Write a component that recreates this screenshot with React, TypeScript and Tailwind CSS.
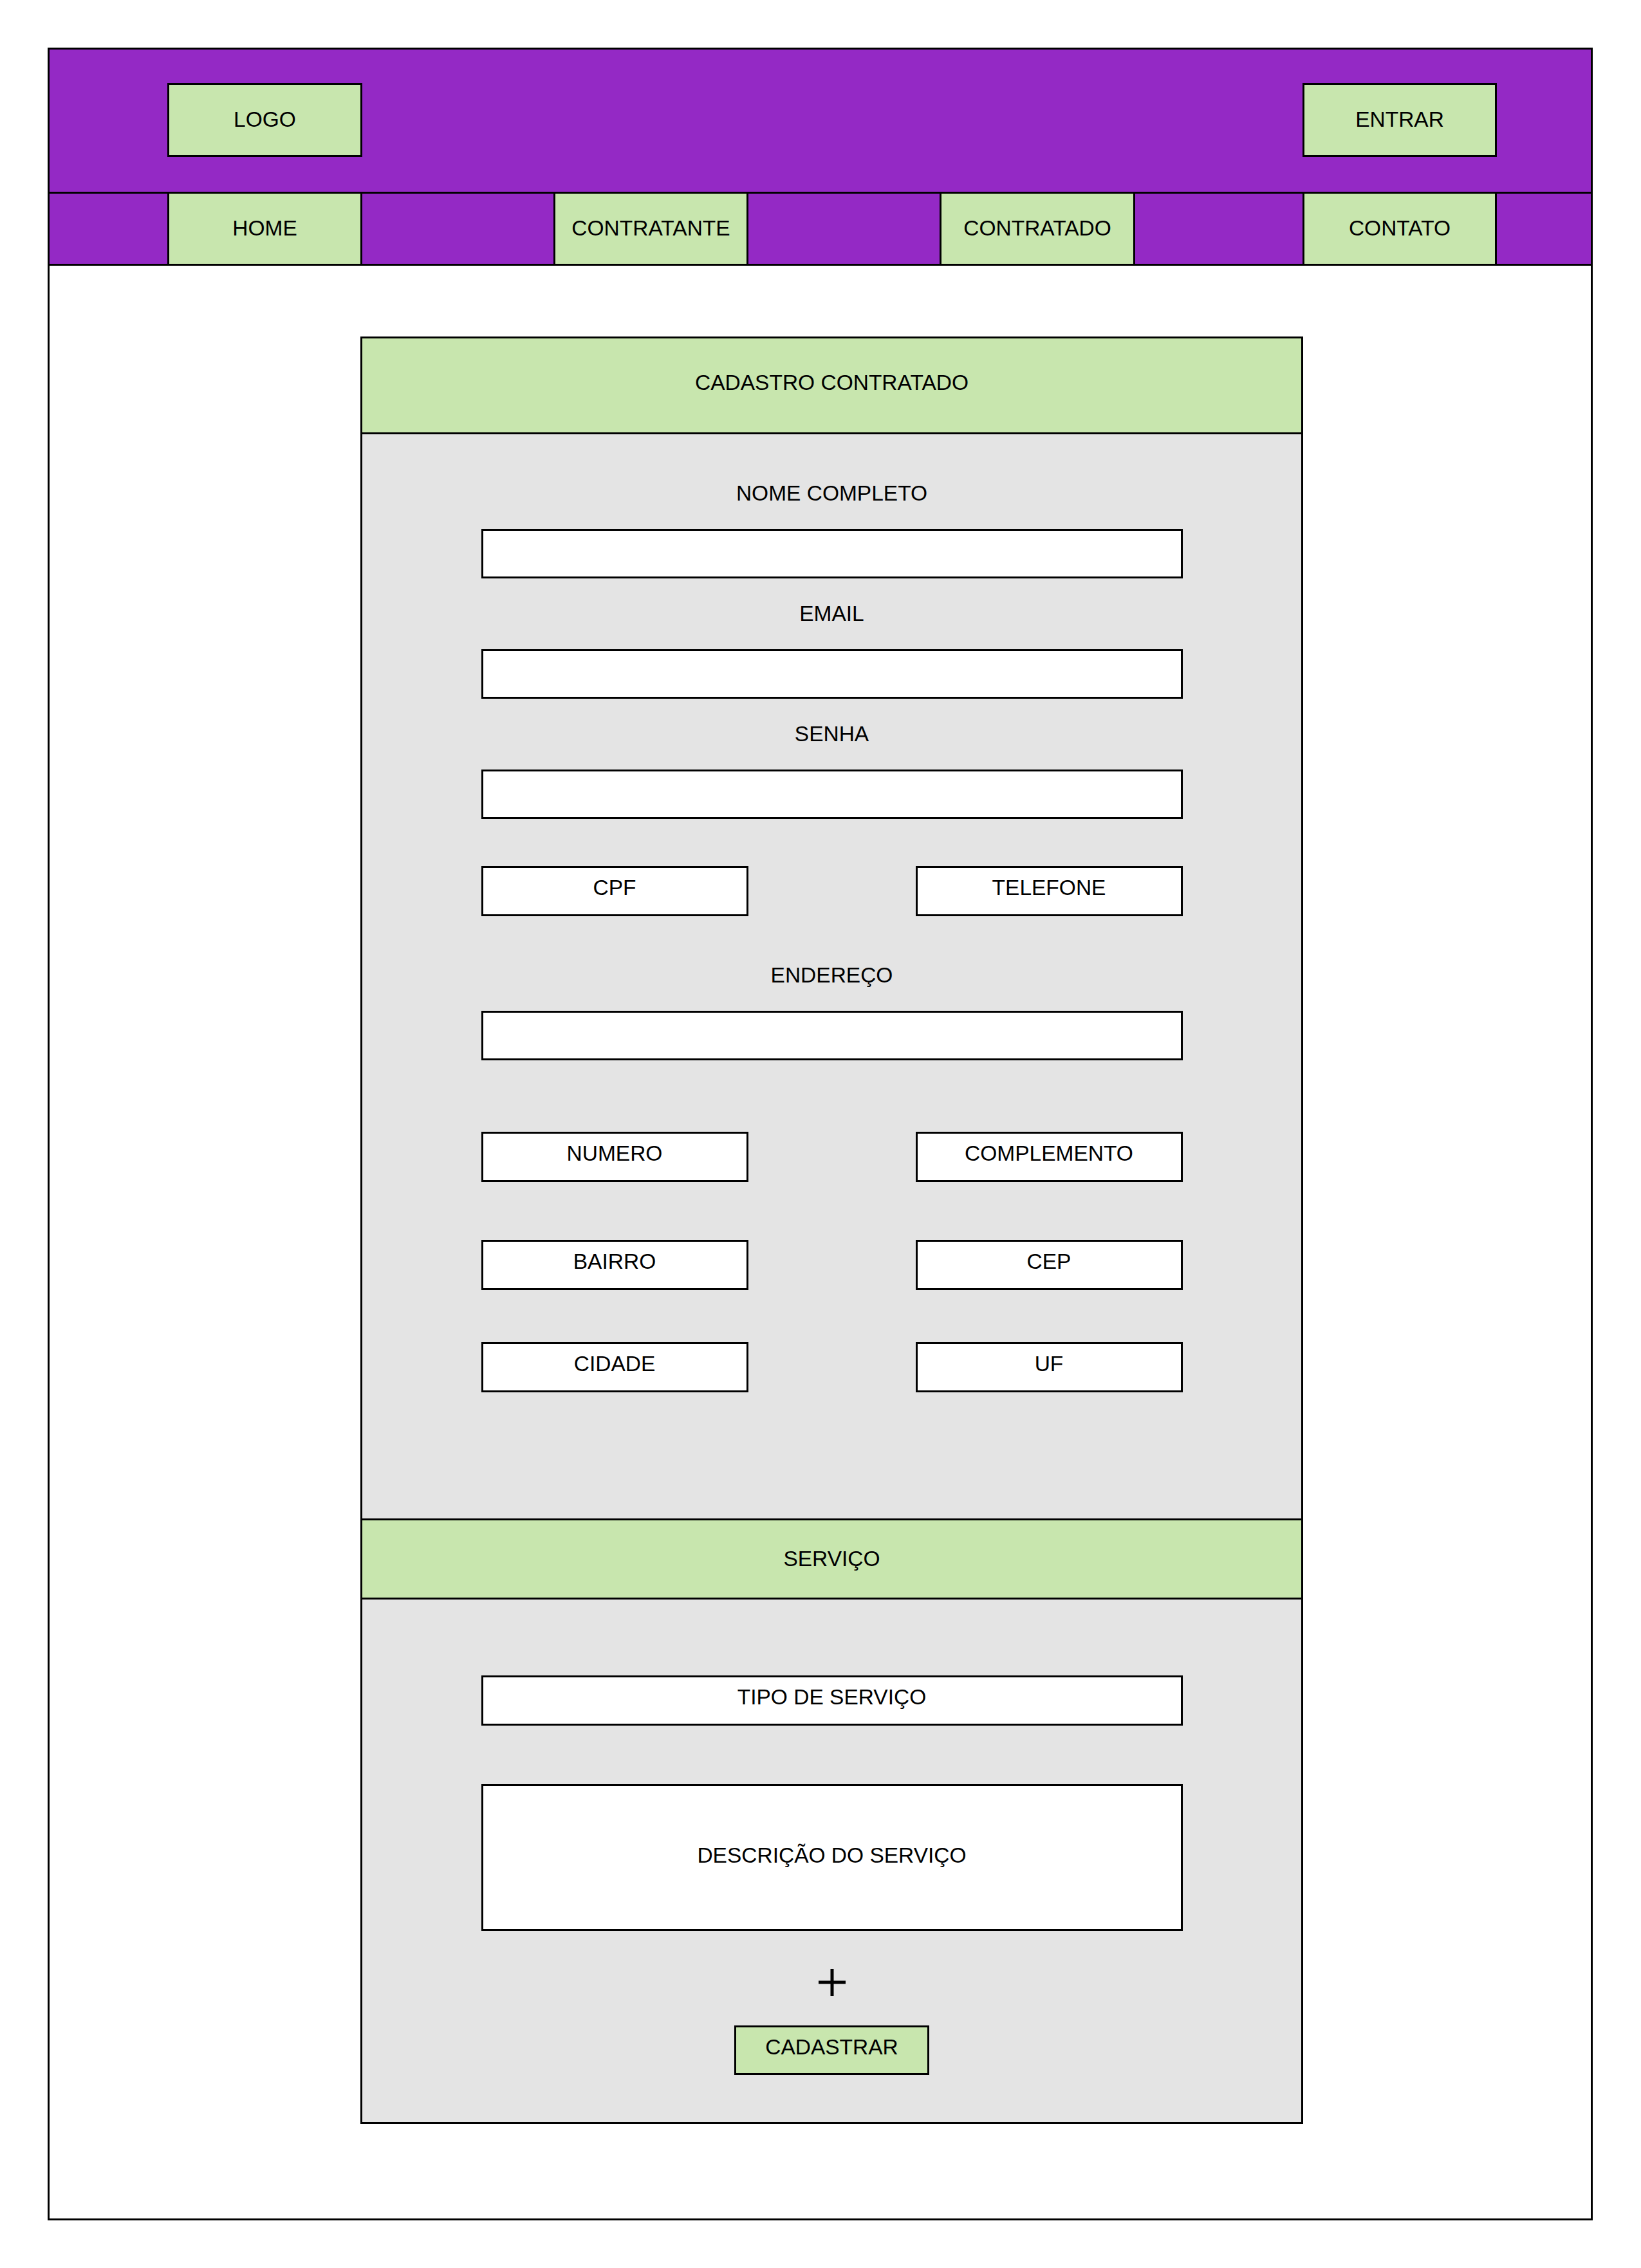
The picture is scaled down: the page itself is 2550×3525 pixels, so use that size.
import React from 'react';

const navItems = [
  { name: 'HOME', cls: 'ml-[183px] w-[303px]' },
  { name: 'CONTRATANTE', cls: 'ml-[297px] w-[303px]' },
  { name: 'CONTRATADO', cls: 'ml-[297px] w-[304px]' },
  { name: 'CONTATO', cls: 'ml-[260px] w-[302px]' },
];

function Label({ text, className }: { text: string; className: string }) {
  return <p className={`text-center text-[33.5px] leading-[34px] ${className}`}>{text}</p>;
}

function Field({ className }: { className: string }) {
  return <div className={`mx-auto h-[77px] w-[1090px] border-[3px] border-black bg-white ${className}`} />;
}

function SmallBox({ text }: { text: string }) {
  return (
    <div className="flex h-[78px] w-[415px] justify-center border-[3px] border-black bg-white pt-[14px]">
      <span className="text-[33.5px] leading-[34px]">{text}</span>
    </div>
  );
}

function PairRow({ left, right, className }: { left: string; right: string; className: string }) {
  return (
    <div className={`mx-auto flex w-[1090px] justify-between ${className}`}>
      <SmallBox text={left} />
      <SmallBox text={right} />
    </div>
  );
}

export default function App() {
  return (
    <div
      className="h-[3525px] w-[2550px] bg-white pl-[74px] pt-[74px] text-black"
      style={{ fontFamily: '"Liberation Sans", Arial, sans-serif' }}
    >
      <div className="flex h-[3377px] w-[2401px] flex-col border-[3px] border-black">
        {/* Header */}
        <header className="flex h-[224px] shrink-0 items-start justify-between border-b-[3px] border-black bg-[#9429C5] pl-[183px] pr-[146px] pt-[52px]">
          <div className="flex h-[115px] w-[303px] items-center justify-center border-[3px] border-black bg-[#C8E6AE] text-[33.5px]">
            LOGO
          </div>
          <div className="flex h-[115px] w-[302px] items-center justify-center border-[3px] border-black bg-[#C8E6AE] text-[33.5px]">
            ENTRAR
          </div>
        </header>

        {/* Nav */}
        <nav className="flex h-[112px] shrink-0 border-b-[3px] border-black bg-[#9429C5]">
          {navItems.map((item) => (
            <div
              key={item.name}
              className={`flex h-full items-center justify-center border-x-[3px] border-black bg-[#C8E6AE] text-[33.5px] ${item.cls}`}
            >
              {item.name}
            </div>
          ))}
        </nav>

        {/* Form card */}
        <div className="ml-[483px] mt-[110px] flex h-[2778px] w-[1465px] flex-col border-[3px] border-black bg-[#E4E4E4]">
          <div className="flex h-[149px] shrink-0 items-center justify-center border-b-[3px] border-black bg-[#C8E6AE] pb-[7px] text-[33.5px]">
            CADASTRO CONTRATADO
          </div>

          <div className="flex h-[1685px] shrink-0 flex-col">
            <Label text="NOME COMPLETO" className="mt-[75px]" />
            <Field className="mt-[38px]" />
            <Label text="EMAIL" className="mt-[38px]" />
            <Field className="mt-[38px]" />
            <Label text="SENHA" className="mt-[38px]" />
            <Field className="mt-[38px]" />
            <PairRow left="CPF" right="TELEFONE" className="mt-[73px]" />
            <Label text="ENDEREÇO" className="mt-[75px]" />
            <Field className="mt-[38px]" />
            <PairRow left="NUMERO" right="COMPLEMENTO" className="mt-[111px]" />
            <PairRow left="BAIRRO" right="CEP" className="mt-[90px]" />
            <PairRow left="CIDADE" right="UF" className="mt-[81px]" />
          </div>

          <div className="flex h-[126px] shrink-0 items-center justify-center border-y-[3px] border-black bg-[#C8E6AE] text-[33.5px]">
            SERVIÇO
          </div>

          <div className="flex flex-1 flex-col items-center">
            <div className="mt-[118px] flex h-[78px] w-[1090px] justify-center border-[3px] border-black bg-white pt-[14px]">
              <span className="text-[33.5px] leading-[34px]">TIPO DE SERVIÇO</span>
            </div>
            <div className="mt-[91px] flex h-[228px] w-[1090px] items-center justify-center border-[3px] border-black bg-white pb-[7px]">
              <span className="text-[33.5px] leading-[34px]">DESCRIÇÃO DO SERVIÇO</span>
            </div>
            <svg className="mt-[58px]" width="44" height="44" viewBox="0 0 44 44">
              <line x1="22" y1="1" x2="22" y2="43" stroke="#000" strokeWidth="5" />
              <line x1="1" y1="22" x2="43" y2="22" stroke="#000" strokeWidth="5" />
            </svg>
            <div className="mt-[45px] flex h-[77px] w-[303px] justify-center border-[3px] border-black bg-[#C8E6AE] pt-[14px]">
              <span className="text-[33.5px] leading-[34px]">CADASTRAR</span>
            </div>
          </div>
        </div>
      </div>
    </div>
  );
}
